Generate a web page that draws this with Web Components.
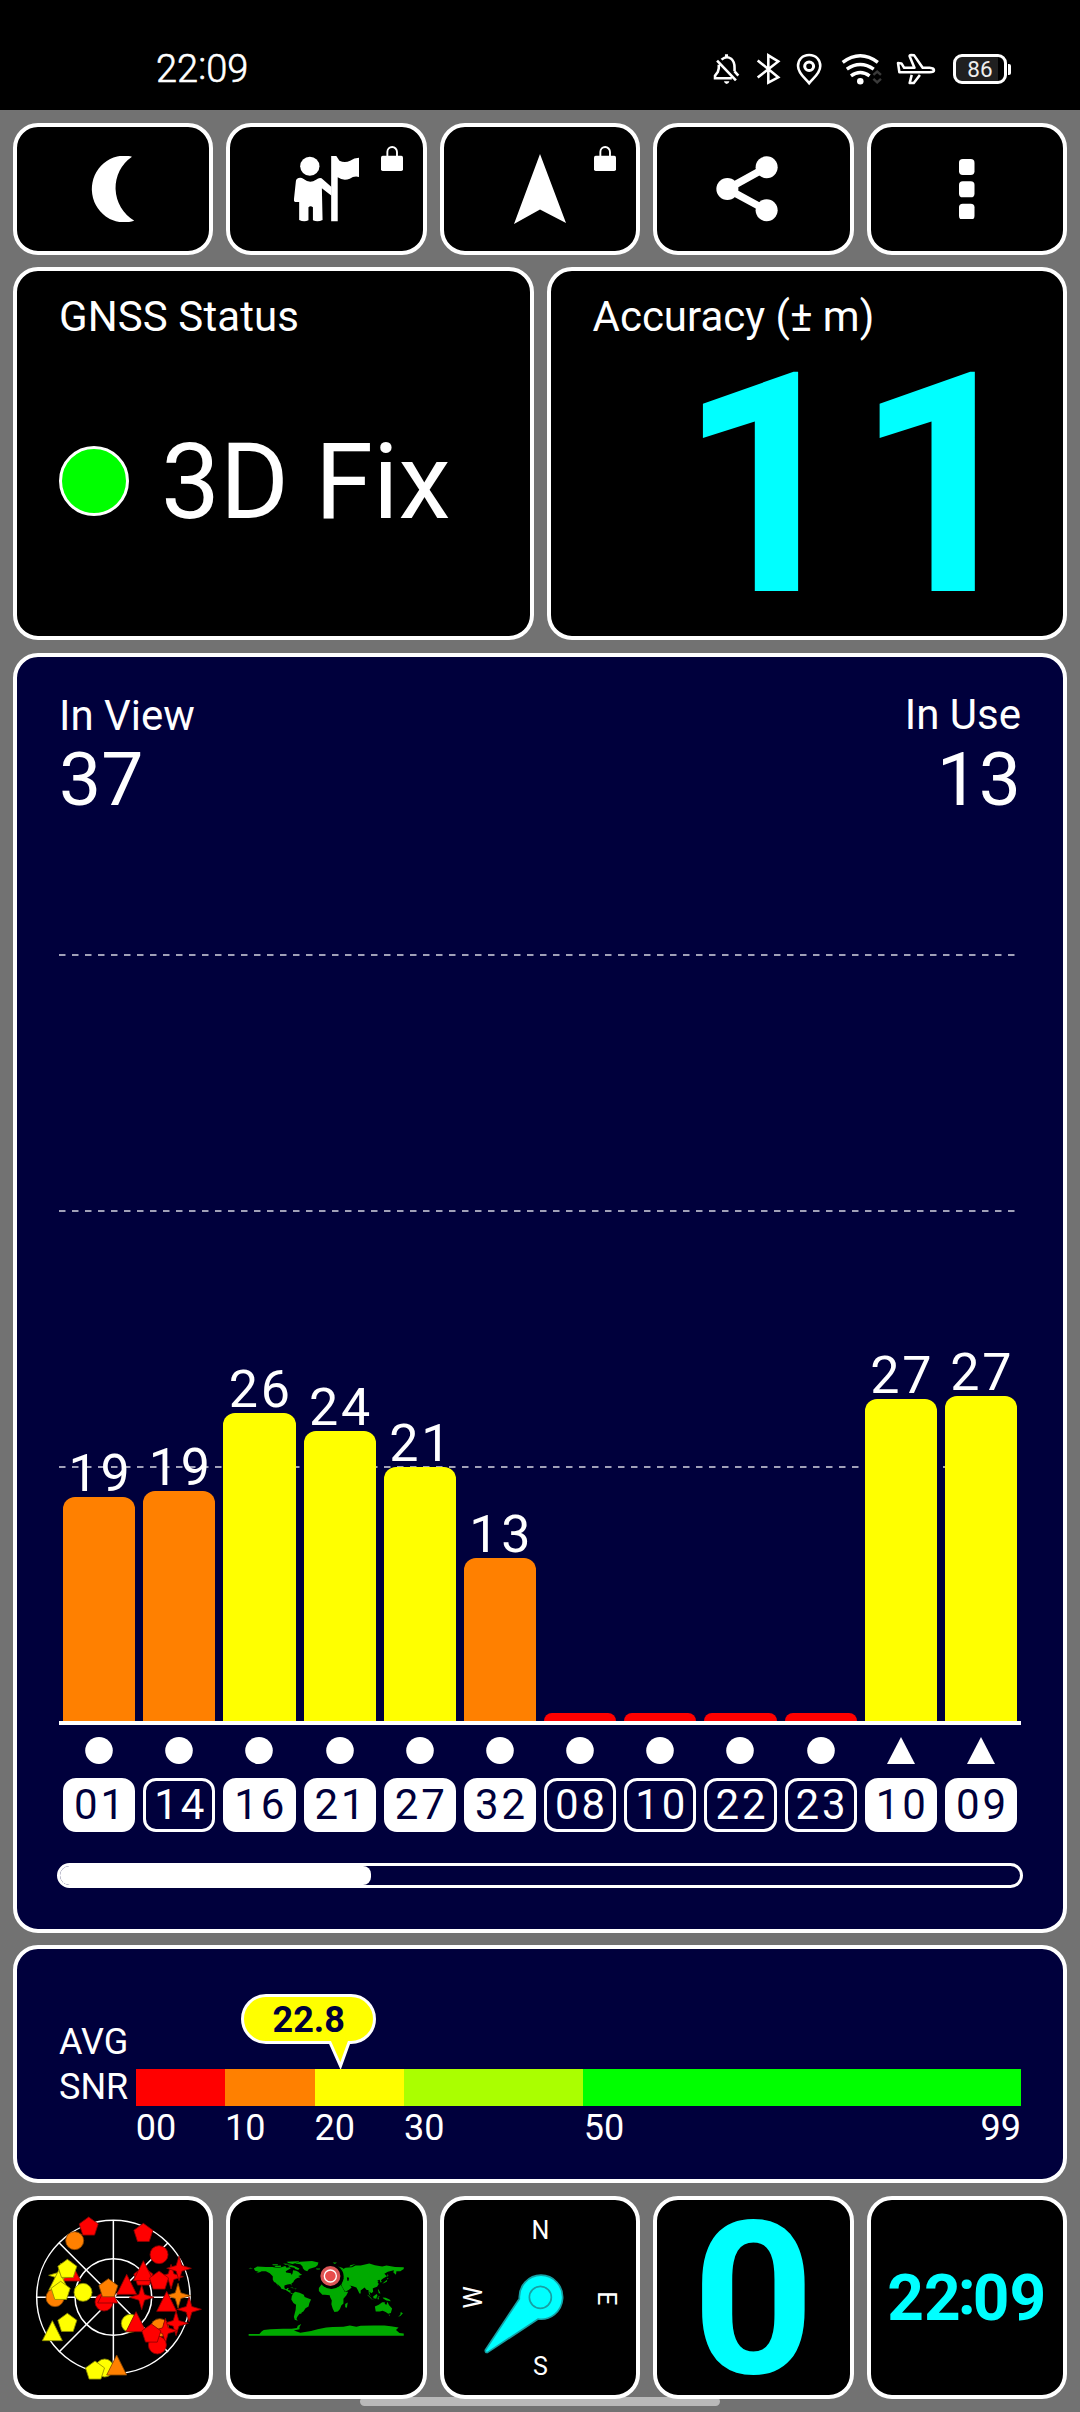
<!DOCTYPE html>
<html lang="en">
<head>
<meta charset="utf-8">
<title>GPS Test</title>
<style>
html,body{margin:0;padding:0;background:#727272}
body{width:1080px;height:2412px;overflow:hidden;font-family:Roboto,"Liberation Sans",sans-serif;color:#fff}
</style>
</head>
<body>
<gps-app></gps-app>
<script>
const define = (name, render) => customElements.define(name, class extends HTMLElement {
  connectedCallback() {
    if (this.shadowRoot) return;
    this.attachShadow({ mode: 'open' }).innerHTML = render(this);
  }
});

/* Status bar */
define('status-bar', () => `
<style>
:host{display:flex;align-items:center;height:82px;padding:28px 69px 0 156px;background:#000}
.time{font-size:38px;line-height:50px;font-weight:300;-webkit-text-stroke:.6px #fff;font-kerning:none}
.time i{font-style:normal;display:inline-block;transform:translateY(-3px)}
.icons{display:flex;align-items:center;margin-left:auto}
svg{display:block;fill:none;stroke:#fff;stroke-width:7.5;overflow:visible}
.bat{display:flex;align-items:center;margin-left:18px}
.body{box-sizing:border-box;width:54px;height:30px;border:3px solid #fff;border-radius:9px;display:flex;align-items:center;justify-content:center;
 background:linear-gradient(90deg,#202020 42px,#000 42px);font-size:22.5px;line-height:24px;font-weight:400;color:#eee}
.nub{width:3px;height:11px;margin-left:1px;background:#fff;border-radius:0 2px 2px 0}
</style>
<span class="time">22<i>:</i>09</span>
<div class="icons">
<svg width="25" height="30" viewBox="505 161 73 90" preserveAspectRatio="none"><path d="M527 178Q541 165 555 175Q565 184 565 202V213M519 193V204L516 215L508 226V234H557M514 181L569 240M565 213L576 226"/><path d="M534 243h16q-2 8-8 8t-8-8zM537 162h9v8h-9z" fill="#fff" stroke="none"/></svg>
<svg style="margin-left:18px" width="22.3" height="30" viewBox="630 162 65 89" preserveAspectRatio="none"><path d="M632 181L692 231L663 247V166L692 184L632 232"/></svg>
<svg style="margin-left:18px" width="24.3" height="30.5" viewBox="746 162 71 92" preserveAspectRatio="none"><path d="M781.500 165C761 165 749 180 749 198C749 221 771 236 781.500 250C792 236 814 221 814 198C814 180 802 165 781.500 165Z"/><circle cx="781.500" cy="199" r="13" stroke-width="9"/></svg>
<svg style="margin-left:20px" width="40" height="30" viewBox="876 162 116 89" preserveAspectRatio="none"><path stroke-width="10" d="M902 227Q929 207 956 227M890 207Q929 179 968 207M878 187Q929 148 980 187"/><circle cx="929" cy="243" r="9.500" fill="#fff" stroke="none"/><path stroke="#3a3a3a" stroke-width="7" d="M967 224l11-10 11 10M967 236l11 10 11-10"/></svg>
<svg style="margin-left:15.500px" width="38" height="30" viewBox="1037 162 111 89" preserveAspectRatio="none"><path stroke-linejoin="round" d="M1040 189L1050 190L1058 203H1088L1074 169Q1073 165 1078 165L1087 166L1112 203H1132Q1145 204 1145 210Q1145 216 1132 216H1044ZM1080 224L1074 248H1086L1104 224"/></svg>
<div class="bat"><div class="body">86</div><div class="nub"></div></div>
</div>`);

/* Framed surface with optional badge slot */
define('panel-card', () => `
<style>
:host{display:block;box-sizing:border-box;border:4px solid #fff;border-radius:25px;background:#000;position:relative;min-width:0}
:host([navy]){background:#00003c}
:host([center]){display:flex;align-items:center;justify-content:center}
::slotted([slot=badge]){position:absolute;right:20px;top:19px}
</style><slot></slot><slot name="badge"></slot>`);

define('lock-badge', () => `
<style>:host{display:block;width:22px;height:25px}svg{display:block}</style>
<svg width="22" height="25" viewBox="1106 438 64 74" preserveAspectRatio="none"><rect x="1106" y="467" width="64" height="45" rx="5" fill="#fff"/><path d="M1124.500 470V456a14 15 0 0 1 28 0v14" fill="none" stroke="#fff" stroke-width="5.500"/></svg>`);

const icons = {
  moon: ['262 467 126 200', 43.4, 66.7, '<path d="M381 469A94 100 0 1 0 388 661A108 113 0 0 1 381 469Z"/>'],
  guide: ['855 468 190 198', 65.4, 66, '<ellipse cx="901" cy="499" rx="28" ry="28.500"/><path d="M863 537Q873 530 883 537Q901 552 919 539Q928 532 935 535L964 561V587L936 565L938 660Q924 667 910 661V622Q903 616 897 622V661Q884 667 870 660V606H858Q853 602 855 596L860 548Q860 540 863 537Z"/><path d="M963 468h15l9 14q16 8 31 0q12-9 26-9v58q-14-4-27 5q-18 8-35-4V664H963Z"/>'],
  arrow: ['0 0 52 70', 52, 70, '<path d="M26 0L52 69L26 55.500L0 70Z"/>'],
  share: ['512 470 180 196', 62, 65.3, '<ellipse cx="659" cy="504" rx="32" ry="33"/><ellipse cx="545" cy="569" rx="32" ry="33"/><ellipse cx="659" cy="633" rx="32" ry="33"/><path d="M659 504L545 569L659 633" fill="none" stroke="#fff" stroke-width="22"/>'],
  more: ['1218 477 45 182', 15.5, 60.7, '<rect x="1218" y="477" width="45" height="48" rx="11"/><rect x="1218" y="544" width="45" height="48" rx="11"/><rect x="1218" y="611" width="45" height="48" rx="11"/>']
};
define('tool-icon', el => {
  const [vb, w, h, body] = icons[el.getAttribute('name')];
  return `<style>:host{display:block}svg{display:block;fill:#fff}</style>
<svg width="${w}" height="${h}" viewBox="${vb}" preserveAspectRatio="none">${body}</svg>`;
});

define('gnss-status', () => `
<style>
:host{display:block;padding:21px 42px}
h2{margin:0;font-size:42px;line-height:50px;font-weight:400;letter-spacing:.1px}
.row{display:flex;align-items:center;gap:32px;margin-top:79px;font-size:105px;line-height:120px;white-space:nowrap}
.row span{padding-top:2px}
.dot{box-sizing:border-box;width:70px;height:70px;border:3px solid #fff;border-radius:50%;background:#0f0;margin-bottom:2px}
</style><h2>GNSS Status</h2><div class="row"><div class="dot"></div><span>3D Fix</span></div>`);

define('accuracy-readout', () => `
<style>
:host{display:block;padding:21px 32px 0 42px}
h2{margin:0;font-size:42px;line-height:50px;font-weight:400}
p{margin:14px 0 0;text-align:right;font-size:308px;line-height:260px;font-weight:700;color:#0ff;font-kerning:none}
</style><h2>Accuracy (± m)</h2><p>11</p>`);

/* Satellite signal chart */
const sats = [
  ['01', 19, 224, 'o', 1], ['14', 19, 230, 'o', 0], ['16', 26, 308, 'y', 1], ['21', 24, 290, 'y', 1],
  ['27', 21, 254, 'y', 1], ['32', 13, 163, 'o', 1], ['08', '', 8, 'r', 0], ['10', '', 8, 'r', 0],
  ['22', '', 8, 'r', 0], ['23', '', 8, 'r', 0], ['10', 27, 322, 'y', 1, 't'], ['09', 27, 325, 'y', 1, 't']
];
define('sat-chart', () => `
<style>
:host{display:block;padding:34px 42px 0}
header{display:flex;justify-content:space-between;height:125px}
header div{font-size:42px;line-height:50px}
header b{display:block;font-weight:400;font-size:75px;line-height:76px;font-kerning:none}
header div:last-child{text-align:right;margin-top:-1px}
header div:last-child b{margin-top:1px}
.plot{display:grid;height:905px;border-bottom:4px solid #fff}
.plot>*{grid-area:1/1}
.plot svg{display:block}
.row{display:flex;font-kerning:none}
.col{flex:1;padding:0 4px;min-width:0;display:flex;flex-direction:column;align-items:center}
.bars .col{justify-content:flex-end}
.val{font-size:52px;line-height:40px;letter-spacing:2.8px;padding-left:2.8px;margin:0 -8px 3px}
.bar{width:100%;border-radius:12px 12px 0 0}
.o{background:#ff8000}.y{background:#ff0}.r{background:#f00}
.r{border-radius:8px 8px 0 0}
.marks{margin-top:12px}
.marks svg{display:block;fill:#fff}
.tag{box-sizing:border-box;width:100%;height:54px;margin-top:14px;border:3px solid #fff;border-radius:13px;display:flex;align-items:center;justify-content:center;font-size:42px;line-height:48px;letter-spacing:2.9px;padding-left:2.9px}
.tag.on{background:#fff;color:#00003c}
.scroll{box-sizing:border-box;height:25px;margin:31px -2px 0;border:3px solid #fff;border-radius:13px;display:flex;overflow:hidden}
.thumb{width:311px;background:#fff;border-radius:0 8px 8px 0}
</style>
<header><div>In View<b>37</b></div><div>In Use<b>13</b></div></header>
<div class="plot">
<svg width="962" height="905"><path d="M0 139H957M0 395H957M0 651H957" stroke="#a0a0b8" stroke-width="2" stroke-dasharray="6.500 6.500" fill="none"/></svg>
<div class="row bars">${sats.map(s => `<div class="col">${s[1] ? `<span class="val">${s[1]}</span>` : ''}<div class="bar ${s[3]}" style="height:${s[2]}px"></div></div>`).join('')}</div>
</div>
<div class="row marks">${sats.map(s => `<div class="col"><svg width="28" height="27">${s[5] ? '<path d="M14 0L28 27H0Z"/>' : '<ellipse cx="14" cy="13.500" rx="13.800" ry="13.500"/>'}</svg><div class="tag ${s[4] ? 'on' : ''}">${s[0]}</div></div>`).join('')}</div>
<div class="scroll"><div class="thumb"></div></div>`);

/* Average SNR gauge */
define('snr-gauge', () => `
<style>
:host{display:flex;padding:0 42px;font-size:36px}
.lab{width:76.700px;margin-top:71px;line-height:45px}
.lab div{white-space:nowrap}
.main{flex:1;margin-top:120px;font-kerning:none}
.track{display:flex;height:37px;position:relative}
.track i{flex:10}
.ticks{display:flex;line-height:40px;margin-top:2px}
.ticks span{flex:10 0 0;display:flex;justify-content:space-between}
.tip{position:absolute;left:105.500px;top:-75px;display:grid;width:135px;height:75px}
.tip>*{grid-area:1/1}
.tip b{text-align:center;line-height:53px;color:#00003c;font-weight:700}
</style>
<div class="lab"><div>AVG</div><div>SNR</div></div>
<div class="main">
<div class="track">
<i style="background:#f00"></i><i style="background:#ff8000"></i><i style="background:#ff0"></i><i style="background:#af0;flex:20"></i><i style="background:#0f0;flex:49"></i>
<div class="tip"><svg width="135" height="75"><path d="M25 1.500H110A23.500 23.500 0 0 1 110 48.500L108 48.500L99.500 72L89 48.500H25A23.500 23.500 0 0 1 25 1.500Z" fill="#ff0" stroke="#fff" stroke-width="3"/></svg><b>22.8</b></div>
</div>
<div class="ticks"><span>00</span><span>10</span><span>20</span><span style="flex-grow:20">30</span><span style="flex-grow:49"><u style="text-decoration:none;margin-left:1px">50</u><u style="text-decoration:none">99</u></span></div>
</div>`);

/* Sky plot thumbnail */
const C = { r: ['#f00', '#8c0000'], o: ['#ff8000', '#8c4600'], y: ['#ff0', '#8c8c00'] };
const poly = (cx, cy, pts) => pts.map(([x, y]) => `${(cx + x).toFixed(1)},${(cy + y).toFixed(1)}`).join(' ');
const ring = (n, r, r2) => Array.from({ length: n }, (_, i) => {
  const a = -Math.PI / 2 + i * 2 * Math.PI / n, R = r2 && i % 2 ? r2 : r;
  return [R * Math.cos(a), R * Math.sin(a)];
});
const shape = (kind, c, x, y) => {
  const a = `fill="${C[c][0]}" stroke="${C[c][1]}" stroke-width="2.500"`;
  if (kind === 'c') return `<circle cx="${x}" cy="${y}" r="27" ${a}/>`;
  const pts = kind === 'p' ? ring(5, 30) : kind === 's' ? ring(8, 37, 12) : [[0, -34], [30, 26], [-30, 26]];
  return `<polygon points="${poly(x, y, pts)}" ${a}/>`;
};
const sky = [
  'p r 236 111', 'p r 400 130', 'c o 194 152', 'c r 447 194', 't r 182 247', 's y 153 256', 't y 146 275',
  'p y 172 238', 'c o 135 323', 'p y 152 304', 'c y 219 307', 'c r 282 336', 't r 293 313', 'p o 295 296',
  't r 350 287', 'p r 400 261', 't r 400 246', 's r 483 260', 's r 507 235', 'p r 447 273', 's r 395 322', 's o 504 317',
  't r 470 338', 's r 537 358', 'c y 361 400', 't r 378 399', 'c o 449 413', 's r 498 400', 's r 466 422',
  'c r 442 465', 'p r 424 432', 'p y 172 400', 't y 127 426', 'c y 284 534', 'p y 255 543', 't o 320 529'
];
define('sky-plot', () => `
<style>:host,svg{display:block;width:100%;height:100%}</style>
<svg viewBox="21 30 577 585" preserveAspectRatio="none"><g fill="none" stroke="#fff" stroke-width="4.500"><circle cx="310" cy="321" r="230"/><circle cx="310" cy="321" r="115"/><path d="M310 91V551M80 322H540M147 158L474 486M474 158L147 486"/></g>
${sky.map(s => { const [k, c, x, y] = s.split(' '); return shape(k, c, +x, +y); }).join('')}</svg>`);

/* World map thumbnail: outlines given as longitude,latitude */
const land = [
  '-168,66 -160,71 -140,70 -125,70 -115,68 -108,68 -95,72 -92,68 -85,69 -82,67 -87,64 -94,60 -93,57 -82,55 -80,51 -78,55 -77,62 -70,61 -65,59 -60,54 -56,52 -65,49 -60,46 -67,44 -71,42 -75,38 -76,35 -81,31 -80,26 -83,30 -90,29 -97,27 -97,21 -94,18 -91,19 -90,21 -87,21 -89,16 -83,15 -83,10 -77,9 -80,7 -86,11 -94,16 -104,19 -106,23 -112,29 -114,31 -110,23 -117,33 -121,35 -124,40 -124,48 -131,55 -140,60 -150,60 -153,58 -163,55 -157,59 -165,61',
  '-90,73 -80,74 -72,71 -62,66 -65,63 -72,65 -74,68 -84,70', '-120,72 -105,73 -105,69 -117,69', '-100,78 -85,77 -80,76 -95,75', '-92,82 -65,83 -62,82 -78,77 -88,79', '-125,76 -112,76 -113,73 -124,74',
  '-73,78 -60,82 -33,83.500 -18,80 -20,74 -25,70 -40,65 -44,60 -50,62 -54,67 -55,71 -60,76', '-24,66 -14,66 -15,64 -22,64',
  '-77,8 -72,12 -62,10 -52,5 -50,0 -35,-6 -39,-14 -41,-22 -48,-26 -53,-34 -57,-36 -58,-39 -62,-39 -65,-43 -67,-46 -69,-51 -66,-55 -73,-53 -75,-46 -73,-38 -71,-30 -70,-18 -76,-14 -81,-6 -80,1',
  '-17,21 -10,30 -6,35 10,37 11,33 20,31 33,31 35,27 43,12 51,12 47,4 40,-4 40,-15 35,-20 32,-28 27,-34 19,-35 15,-27 12,-17 13,-8 9,0 8,4 -3,5 -9,5 -17,14',
  '44,-16 50,-13 48,-25 44,-24',
  '-9,37 -9,43 -1,44 -4,48 3,51 8,54 9,57 12,54 20,54 22,59 30,60 22,62 25,66 18,60 16,56 13,59 6,58 5,62 15,69 28,71 40,67 37,64 45,68 60,69 68,73 80,73 100,78 113,74 130,71 140,73 160,70 180,69 180,65 172,60 163,60 162,52 156,57 157,62 143,59 135,54 141,48 132,43 127,39 129,35 126,34 124,40 118,39 122,37 119,35 122,30 118,24 110,21 108,20 109,12 105,9 100,13 103,2 99,8 98,16 94,16 89,22 80,15 80,8 77,8 73,17 70,22 62,25 57,26 51,28 56,26 59,22 52,16 44,12 38,22 35,29 36,36 27,37 26,40 20,40 23,37 19,42 13,45 18,40 16,38 12,42 8,44 3,42 -2,37',
  '-5,50 1,51 -2,57 -6,58', '95,5 106,-6 114,-8 106,-5 104,-2 98,4', '109,1 117,7 119,4 116,-4 110,-3', '119,-5 120,1 125,1 121,-1 123,-5', '120,18 122,17 126,8 122,9', '131,-1 138,-2 147,-6 150,-10 140,-8 133,-4', '130,31 136,33 141,36 142,44 145,44 140,39 136,36', '142,54 144,50 142,46',
  '113,-22 122,-18 130,-12 136,-12 136,-16 140,-18 142,-11 146,-19 153,-27 150,-37 144,-39 138,-35 131,-32 124,-34 115,-34', '145,-41 148,-41 147,-44', '173,-35 178,-38 175,-41 172,-44 167,-46 172,-41', '54,71 56,74 68,77 58,71', '15,80 25,80 20,77', '-180,66 -170,66 -176,68', '-84,22 -75,20 -78,22', '-74,20 -68,19 -72,18',
  '-180,-86 -155,-86 -150,-80 -145,-77 -130,-75 -100,-74 -80,-74 -68,-72 -66,-67 -58,-63 -62,-70 -62,-75 -75,-78 -60,-83 -35,-79 -20,-75 0,-71 15,-70 40,-69 55,-66 70,-69 80,-67 110,-66 135,-66 150,-68 168,-71 162,-77 170,-84 180,-85 180,-90 -180,-90'
];
define('world-map', () => `
<style>:host,svg{display:block;width:100%;height:100%}</style>
<svg viewBox="31 30 577 585" preserveAspectRatio="none"><g transform="translate(319.500 321) scale(1.292 -1.290)" fill="#00aa00">${land.map(p => `<polygon points="${p}"/>`).join('')}<path d="M28 46L34 47L41 42L28 41ZM48 46L53 45L52 38L49 38Z" fill="#000"/></g>
<circle cx="335" cy="260" r="37" fill="#000"/><circle cx="332" cy="258" r="30" fill="#dc5656"/><circle cx="332" cy="258" r="18" fill="#e84c4c" stroke="#fff" stroke-width="4"/></svg>`);

define('compass-rose', () => `
<style>:host,svg{display:block;width:100%;height:100%}text{font-family:Roboto,sans-serif;font-size:75px;fill:#fff;text-anchor:middle}</style>
<svg viewBox="41 30 577 585" preserveAspectRatio="none">
<text x="330" y="146">N</text><text x="330" y="555">S</text>
<text transform="translate(504 325) rotate(90)">E</text><text transform="translate(156 322) rotate(-90)">W</text>
<path d="M267 326A65 66 0 1 1 323 387L172 487Q164 489 165 480Z" fill="#0ff" stroke="#16a0a4" stroke-width="5"/><circle cx="330" cy="322" r="33" fill="none" stroke="#16a0a4" stroke-width="5"/></svg>`);

define('big-digit', () => `<style>:host{display:block;font-size:213px;line-height:195px;font-weight:700;color:#0ff;padding-top:5px;margin-bottom:-1px}</style><slot></slot>`);
define('clock-face', () => `<style>:host{display:block;font-size:64px;line-height:70px;font-weight:700;color:#0ff;white-space:nowrap;padding-top:3px;font-kerning:none}i{font-style:normal;display:inline-block;margin:0 -3px;transform:translateY(-6px)}</style>22<i>:</i>09`);

define('gps-app', () => `
<style>
:host{display:flex;flex-direction:column;height:2412px;position:relative;background:#727272}
main{display:flex;flex-direction:column;gap:13px;padding:13px 13px 0}
.five{display:grid;grid-template-columns:repeat(5,1fr);gap:13px}
.two{display:grid;grid-template-columns:1fr 1fr;gap:13px;margin-top:-1px}
.top panel-card{height:132px}.two panel-card{height:373px}.chart{height:1280px}.snr{height:238px;margin-top:-1px}.bot panel-card{height:203px}
.pill{position:absolute;left:360px;top:2397px;width:360px;height:9px;border-radius:5px;background:rgba(255,255,255,.5)}
</style>
<status-bar></status-bar>
<main>
<div class="five top">
<panel-card center><tool-icon name="moon" style="margin-right:2px"></tool-icon></panel-card>
<panel-card center><tool-icon name="guide"></tool-icon><lock-badge slot="badge"></lock-badge></panel-card>
<panel-card center><tool-icon name="arrow"></tool-icon><lock-badge slot="badge"></lock-badge></panel-card>
<panel-card center><tool-icon name="share" style="margin-right:12px"></tool-icon></panel-card>
<panel-card center><tool-icon name="more"></tool-icon></panel-card>
</div>
<div class="two">
<panel-card><gnss-status></gnss-status></panel-card>
<panel-card><accuracy-readout></accuracy-readout></panel-card>
</div>
<panel-card navy class="chart"><sat-chart></sat-chart></panel-card>
<panel-card navy class="snr"><snr-gauge></snr-gauge></panel-card>
<div class="five bot">
<panel-card><sky-plot></sky-plot></panel-card>
<panel-card><world-map></world-map></panel-card>
<panel-card><compass-rose></compass-rose></panel-card>
<panel-card center><big-digit>0</big-digit></panel-card>
<panel-card center><clock-face></clock-face></panel-card>
</div>
</main>
<div class="pill"></div>`);
</script>
</body>
</html>
